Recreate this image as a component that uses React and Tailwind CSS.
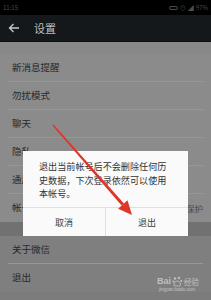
import React from 'react';

const font = { fontFamily: '"Noto Sans CJK SC", "Noto Sans", sans-serif' };

const SettingRow = ({ label, right, last }) => (
  <div className="relative flex items-center h-[28px] pl-[12px] pr-[8px]">
    <span className="text-[9.5px] text-[#282828] leading-none">{label}</span>
    {right && <span className="ml-auto text-[8.5px] text-[#4a4a4a] leading-none">{right}</span>}
    {!last && <div className="absolute left-[8px] right-[8px] bottom-0 h-px bg-[#979797]" />}
  </div>
);

const App = () => {
  return (
    <div className="relative w-[211px] h-[300px] overflow-hidden bg-[#7c7c7c]" style={font}>
      {/* status bar */}
      <div className="flex items-center h-[15px] bg-black px-[3px]">
        <span className="text-[6px] text-[#4d4d4d] leading-none">11:15</span>
        <div className="ml-auto flex items-center gap-[2px] text-[6px] text-[#4d4d4d] leading-none">
          <span className="w-[9px] h-[4px] rounded-sm border border-[#4d4d4d]" />
          <span>⊙</span>
          <span>◢</span>
          <span>97%</span>
        </div>
      </div>

      {/* toolbar */}
      <div className="flex items-center h-[27px] bg-[#15181b] border-b border-[#0c0e10]">
        <svg width="12" height="10" viewBox="0 0 12 10" className="ml-[8px]">
          <path d="M11 5H1.5M5.5 1L1.5 5l4 4" fill="none" stroke="#c8c8c8" strokeWidth="1.3" />
        </svg>
        <span className="ml-[14px] text-[11px] text-[#bdbdbd] leading-none">设置</span>
      </div>

      {/* settings list */}
      <div className="h-[12px] bg-[#888888]" />
      <div className="bg-[#8b8b8b]">
        <SettingRow label="新消息提醒" />
        <SettingRow label="勿扰模式" />
        <SettingRow label="聊天" />
        <SettingRow label="隐私" />
        <SettingRow label="通用" />
        <SettingRow label="帐号与安全" right="已保护" last />
      </div>
      <div className="h-[14px] bg-[#717171]" />
      <div className="bg-[#7f7f7f]">
        <SettingRow label="关于微信" />
        <SettingRow label="退出" last />
      </div>

      {/* baidu watermark */}
      <div className="absolute left-[157px] top-[276px] flex flex-col items-start text-white/50 leading-none">
        <div className="flex items-center">
          <span className="text-[9px] font-bold" style={{ fontFamily: '"Liberation Sans", sans-serif' }}>Bai</span>
          <svg width="11" height="11" viewBox="0 0 11 11" className="mx-[1px]">
            <circle cx="3" cy="2.5" r="1.2" fill="rgba(255,255,255,0.5)" />
            <circle cx="7" cy="2" r="1.2" fill="rgba(255,255,255,0.5)" />
            <circle cx="1.5" cy="5.5" r="1.1" fill="rgba(255,255,255,0.5)" />
            <circle cx="9.3" cy="5" r="1.1" fill="rgba(255,255,255,0.5)" />
            <path d="M5.3 5c-2 0-3.5 2.5-3.3 4 .2 1.2 1.8 1 3.3 1s3 .3 3.3-1c.2-1.6-1.4-4-3.3-4z" fill="none" stroke="rgba(255,255,255,0.5)" strokeWidth="0.9" />
          </svg>
          <span className="text-[7.5px]">经验</span>
        </div>
        <span className="text-[4.5px] mt-[1px] ml-[2px]" style={{ fontFamily: '"Liberation Sans", sans-serif' }}>jingyan.baidu.com</span>
      </div>

      {/* dialog */}
      <div className="absolute left-[23px] top-[151px] w-[165px] h-[85px] bg-[#fafafa] flex flex-col">
        <div className="h-[56px] px-[16px] pt-[9px] text-[9.1px] leading-[13.5px] text-[#333333]">
          退出当前帐号后不会删除任何历史数据，下次登录依然可以使用本帐号。
        </div>
        <div className="flex flex-1 border-t border-[#e0e0e0]">
          <button className="flex-1 flex items-center justify-center text-[9px] text-[#3a3a3a] leading-none border-r border-[#e0e0e0]">取消</button>
          <button className="flex-1 flex items-center justify-center text-[9px] text-[#3a3a3a] leading-none">退出</button>
        </div>
      </div>

      {/* red arrow annotation */}
      <svg className="absolute left-0 top-0 pointer-events-none" width="211" height="300" viewBox="0 0 211 300">
        <polygon points="53.6,124.5 124,203.4 121.6,205.6 52.4,125.5" fill="#e0352b" />
        <polygon points="132,215 127.5,200.3 118.1,208.7" fill="#e0352b" />
      </svg>
    </div>
  );
};

export default App;
